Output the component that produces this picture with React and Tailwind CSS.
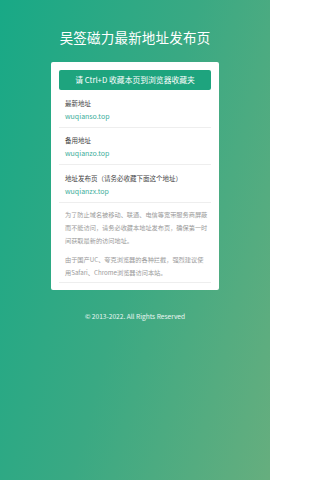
import React from 'react';

const App = () => {
  const addresses = [
    { label: '最新地址', url: 'wuqianso.top' },
    { label: '备用地址', url: 'wuqianzo.top' },
    { label: '地址发布页（请务必收藏下面这个地址）', url: 'wuqianzx.top' },
  ];

  return (
    <div
      className="w-[270px] min-h-screen flex flex-col items-center bg-[linear-gradient(105deg,#18a986_0%,#3aa983_50%,#66ae7e_100%)]"
      style={{ fontFamily: '"Noto Sans CJK SC", "Noto Sans", sans-serif' }}
    >
      {/* Title */}
      <h1 className="pt-[27px] text-[13.5px] leading-[20px] text-white font-normal tracking-[0.2px]">
        吴签磁力最新地址发布页
      </h1>

      {/* Card */}
      <div className="mt-[15px] w-[168px] bg-white rounded-[2px] pt-[8px] pb-[7px] px-[8px]">
        <div className="h-[20px] rounded-[2px] bg-[#1ea47e] flex items-center justify-center text-white text-[7.8px]">
          请 Ctrl+D 收藏本页到浏览器收藏夹
        </div>

        {addresses.map((item, index) => (
          <div key={index} className="px-[6px] pt-[6.5px] pb-[4px] border-b border-[#eeeeee]">
            <p className="text-[6.5px] leading-[13px] text-[#444444]">{item.label}</p>
            <a href="#" className="block text-[7px] leading-[13px] text-[#3cae9b]">
              {item.url}
            </a>
          </div>
        ))}

        <div className="pl-[6px] pr-[2px] pt-[5px] pb-[3px] border-b border-[#eeeeee] text-[6.2px] leading-[13px] text-[#9a9a9a]">
          <p>为了防止域名被移动、联通、电信等宽带服务商屏蔽而不能访问，请务必收藏本地址发布页，确保第一时间获取最新的访问地址。</p>
          <p className="mt-[6px]">由于国产UC、夸克浏览器的各种拦截，强烈建议使用Safari、Chrome浏览器访问本站。</p>
        </div>
      </div>

      {/* Footer */}
      <p className="mt-[20px] text-[6.6px] leading-[12px] text-white/90">
        © 2013-2022. All Rights Reserved
      </p>
    </div>
  );
};

export default App;
